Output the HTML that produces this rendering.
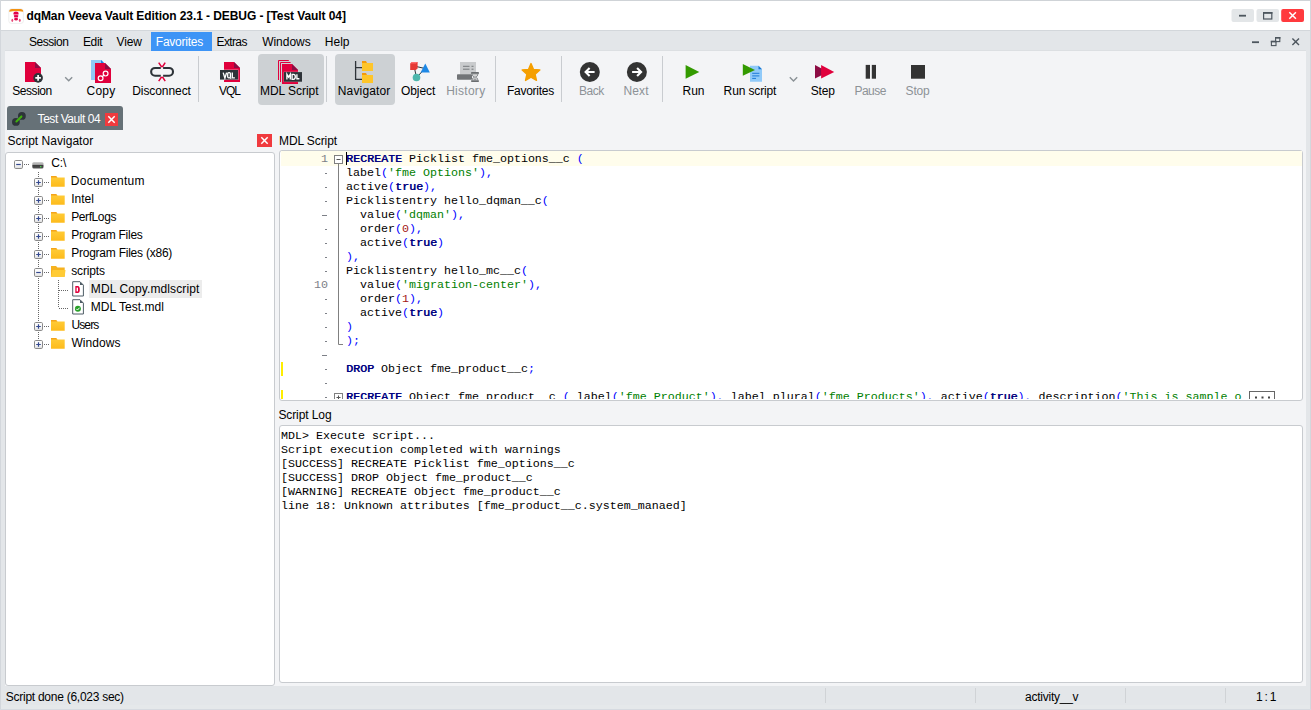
<!DOCTYPE html>
<html><head><meta charset="utf-8">
<style>
*{margin:0;padding:0;box-sizing:border-box}
html,body{width:1311px;height:710px;overflow:hidden}
body{position:relative;background:#e3e6e9;font-family:"Liberation Sans",sans-serif;font-size:12px;color:#000}
.a{position:absolute;white-space:nowrap}
.t{position:absolute;white-space:nowrap;line-height:14px;font-size:12px}
.m{position:absolute;white-space:pre;line-height:14px;font-family:"Liberation Mono",monospace;font-size:11.667px}
#title{left:1px;top:1px;width:1309px;height:29px;background:#fff}
#frameTop{left:0;top:0;width:1311px;height:1px;background:#cfd3d7}
#content{left:5px;top:51px;width:1301px;height:635px;background:#f3f4f6}
.box{position:absolute;background:#fff;border:1px solid #c8cbcf;border-radius:3px}
.tb{color:#000}
.dis{color:#8d9297}
.sep{position:absolute;width:1px;background:#c9ccd0}
.k{color:#000080;text-shadow:0.5px 0 0 #000080}
.p{color:#0000ff}
.s{color:#008000}
.n{color:#a31515}
.ln{position:absolute;white-space:pre;line-height:14px;font-family:"Liberation Mono",monospace;font-size:11.667px;color:#7d8087;text-align:right;width:40px}
</style></head><body>
<div class="a" id="frameTop"></div>
<div class="a" id="title"></div>
<div class="a" id="content"></div>


<!-- window frame lines -->
<div class="a" style="left:0;top:0;width:1px;height:710px;background:#d3d7dc"></div>
<div class="a" style="left:1310px;top:0;width:1px;height:710px;background:#d3d7dc"></div>
<div class="a" style="left:1px;top:30px;width:1309px;height:1px;background:#d3d7db"></div>
<div class="a" style="left:5px;top:50px;width:1301px;height:1px;background:#dcdfe2"></div>
<svg class="a" style="left:0;top:0;z-index:5" width="1311" height="710" viewBox="0 0 1311 710">
 <!-- app icon -->
 <rect x="8.8" y="8.8" width="14.6" height="14.6" rx="2.5" fill="#fff" stroke="#e4e4e4" stroke-width="0.6"/>
 <path d="M9.2 11.8 Q9.2 9 12 9 H20.4 Q23.2 9 23.2 11.8 Q16.2 10.2 9.2 11.8Z" fill="#f39212"/>
 <ellipse cx="16" cy="13.8" rx="2.6" ry="2.4" fill="#e2004a"/>
 <path d="M13.8 15.5 H18.4 L17.4 19.2 H14.8Z" fill="#e2004a"/>
 <ellipse cx="16.1" cy="19.3" rx="1.7" ry="1.2" fill="#e2004a"/>
 <rect x="12" y="14.4" width="8" height="0.7" fill="#fff" opacity="0.75"/>
 <rect x="12" y="17.0" width="8" height="0.7" fill="#fff" opacity="0.75"/>
 <ellipse cx="12.3" cy="20.3" rx="0.9" ry="1.6" fill="#e84a78"/>
 <ellipse cx="19.8" cy="20.3" rx="0.9" ry="1.6" fill="#e84a78"/>

 <!-- window controls -->
 <rect x="1231.5" y="9" width="22.5" height="13" rx="2" fill="#e3e6e8"/>
 <rect x="1239" y="14.8" width="7" height="1.8" fill="#4d565e"/>
 <rect x="1256.5" y="9" width="22.5" height="13" rx="2" fill="#e3e6e8"/>
 <rect x="1263.6" y="12.6" width="8.2" height="6.4" fill="none" stroke="#4d565e" stroke-width="1.2"/>
 <rect x="1263" y="12" width="9.4" height="1.8" fill="#4d565e"/>
 <rect x="1281.2" y="9" width="22.8" height="13" rx="2" fill="#ff3a3e"/>
 <path d="M1289.3 12.2 L1295.9 18.8 M1295.9 12.2 L1289.3 18.8" stroke="#fff" stroke-width="1.5"/>
 <!-- mdi controls -->
 <rect x="1252" y="41.3" width="7" height="1.8" fill="#4d565e"/>
 <rect x="1271.4" y="41.4" width="4.6" height="4.2" fill="none" stroke="#4d565e" stroke-width="1.1"/>
 <rect x="1275.6" y="37.6" width="4.2" height="4" fill="none" stroke="#4d565e" stroke-width="1.1"/>
 <rect x="1275" y="37" width="5.4" height="1.6" fill="#4d565e"/>
 <rect x="1270.8" y="40.8" width="5.6" height="1.6" fill="#4d565e"/>
 <path d="M1292.4 38.4 L1299 45 M1299 38.4 L1292.4 45" stroke="#4d565e" stroke-width="1.4"/>

 <!-- Session -->
 <path d="M25 62 H35 L41 68 V82 H25Z" fill="#e0003c"/>
 <path d="M35 62 L41 68 H35Z" fill="#8c0c44"/>
 
 <circle cx="38.1" cy="77.9" r="4.8" fill="#2d3338"/>
 <path d="M35.3 77.9 H40.9 M38.1 75.1 V80.7" stroke="#fff" stroke-width="1.7"/>
 <path d="M65.2 77.3 L68.7 80.8 L72.2 77.3" fill="none" stroke="#8a9196" stroke-width="1.4"/>
 <!-- Copy -->
 <path d="M91 60 H101.5 L104 62.5 V80 H91Z" fill="#90c8f6"/>
 <path d="M101 60 L104 63 H101Z" fill="#1e80e0"/>
 <path d="M95 63 H105 L111 69 V83 H95Z" fill="#e0003c"/>
 <path d="M105 63 L111 69 H105Z" fill="#8c0c44"/>
 <circle cx="100.6" cy="78.3" r="2.4" fill="none" stroke="#fff" stroke-width="1.2"/>
 <circle cx="105.6" cy="73.6" r="2.4" fill="none" stroke="#fff" stroke-width="1.2"/>
 <path d="M101.8 77 L104.4 74.8" stroke="#fff" stroke-width="1.2"/>
  <!-- Disconnect -->
 <path d="M160.8 67.95 H155.05 A3.9 3.9 0 0 0 155.05 75.75 H160.8" fill="none" stroke="#2d3338" stroke-width="2.1"/>
 <path d="M163.1 67.95 H169.1 A3.9 3.9 0 0 1 169.1 75.75 H163.1" fill="none" stroke="#2d3338" stroke-width="2.1"/>
 <path d="M158.7 62.6 L161.1 66.2 Q162 67 162.9 66.2 L165.2 62.6 M158.7 81.2 L161.1 77.6 Q162 76.8 162.9 77.6 L165.2 81.2" fill="none" stroke="#e0003c" stroke-width="1.5"/>
 <!-- VQL -->
 <path d="M224 62 H234 L240 68 V82 H224Z" fill="#e0003c"/>
 <path d="M234 62 L240 68 H234Z" fill="#8c0c44"/>
 <rect x="219.6" y="69.6" width="18.8" height="10.4" fill="#f3f4f6" opacity="0.7"/>
 <rect x="220" y="70" width="18" height="9.6" fill="#2d3338"/>
 <path d="M223.2 72.6 L224.9 78.2 L226.6 72.6 M230.3 77.6 L231 78.6 M232.3 72.6 V77.8 H234.9" fill="none" stroke="#fff" stroke-width="1.35"/>
 <rect x="227.7" y="72.6" width="2.7" height="5.2" rx="1.1" fill="none" stroke="#fff" stroke-width="1.3"/>
 <!-- MDL -->
 <path d="M278.5 80 V60.5 H288.8" fill="none" stroke="#e0003c" stroke-width="1"/>
 <path d="M280.5 82 V62.5 H290.6" fill="none" stroke="#e0003c" stroke-width="1"/>
 <path d="M282 64 H292 L298 70 V84 H282Z" fill="#e0003c"/>
 <path d="M292 64 L298 70 H292Z" fill="#8c0c44"/>
 <rect x="283.6" y="71.7" width="18.8" height="10.4" fill="#cdd1d4" opacity="0.6"/>
 <rect x="284" y="72.1" width="18" height="9.6" fill="#2d3338"/>
 <path d="M286.9 79.4 V74.3 L288.6 77.2 L290.3 74.3 V79.4 M292.1 74.4 V79.3 H293.5 Q295.3 79.3 295.3 76.85 Q295.3 74.4 293.5 74.4Z M296.9 74.3 V78.7 H299.4" fill="none" stroke="#fff" stroke-width="1.35"/>
<!-- Navigator -->
 <path d="M355.6 61 V80 M355.6 67.6 H362 M355.6 79.4 H362" fill="none" stroke="#2d3338" stroke-width="1.3"/>
 <path d="M362 61 H366 L367 63 H362Z" fill="#f59a0a"/>
 <rect x="362" y="63" width="11" height="8" fill="#fec52a"/>
 <path d="M362 73 H366 L367 75 H362Z" fill="#f59a0a"/>
 <rect x="362" y="75" width="11" height="8" fill="#fec52a"/>
 <!-- Object -->
 <path d="M414 66 L425 68.5 L416.5 77.5 Z" fill="none" stroke="#2d3338" stroke-width="1"/>
 <path d="M410.2 63.5 L412 62 H417.6 V68.5 L415.8 70 H410.2Z" fill="#e53935"/>
 <path d="M410.2 63.5 L412 62 H417.6 L415.8 63.5Z" fill="#ff6b6b"/>
 <path d="M425.3 63.4 L429.8 72.6 H420.6Z" fill="#1e88e5"/>
 <circle cx="416.5" cy="77.5" r="3.8" fill="#4db6ac"/>
 <!-- History -->
 <rect x="460" y="62" width="16" height="12.5" fill="#c9cbcd"/>
 <path d="M463 66.3 H469.5 M471.5 66.3 H473.5 M463 69.2 H469.5 M471.5 69.2 H473.5" stroke="#76797c" stroke-width="1"/>
 <rect x="457" y="74.2" width="15" height="5.6" rx="0.8" fill="#717477"/>
 <path d="M471.2 73 H478.8 M471.2 81.2 H478.8" stroke="#6b6e71" stroke-width="1.8"/>
 <path d="M472 73.8 Q472 76.6 474.6 77.1 Q472 77.7 472 80.4 H478 Q478 77.7 475.4 77.1 Q478 76.6 478 73.8Z" fill="#d3d4d5" stroke="#7a7d80" stroke-width="0.8"/>
 <path d="M473.4 79.8 L475 78.2 L476.6 79.8Z" fill="#8a8d90"/>
 <!-- Favorites star -->
 <path d="M531.00 63.60 L533.53 69.42 L539.84 70.03 L535.09 74.23 L536.47 80.42 L531.00 77.20 L525.53 80.42 L526.91 74.23 L522.16 70.03 L528.47 69.42Z" fill="#f59f00" stroke="#f59f00" stroke-width="1.4" stroke-linejoin="round"/>
 <!-- Back / Next -->
 <circle cx="589.8" cy="72" r="10" fill="#333"/>
 <path d="M594.6 72 H585.8 M589.6 68 L585.6 72 L589.6 76" fill="none" stroke="#fff" stroke-width="2.1"/>
 <circle cx="636.9" cy="72" r="10" fill="#333"/>
 <path d="M632.1 72 H640.9 M637.1 68 L641.1 72 L637.1 76" fill="none" stroke="#fff" stroke-width="2.1"/>
 <!-- Run -->
 <path d="M685.6 65.1 L699.3 71.9 L685.6 78.7Z" fill="#339a00"/>
 <!-- Run script -->
 <path d="M750 65.7 H758.5 L762 69.2 V81.7 H750Z" fill="#90caf9"/>
 <path d="M758.5 65.7 L762 69.2 H758.5Z" fill="#1976d2"/>
 <path d="M752.2 73.3 H759.4 M752.2 75.9 H759.4 M752.2 78.4 H756" stroke="#1e7ad8" stroke-width="1"/>
 <path d="M742.8 64 L755 69.9 L742.8 75.8Z" fill="#339a00"/>
 <path d="M789.8 77.2 L793.5 80.9 L797.2 77.2" fill="none" stroke="#8a9196" stroke-width="1.4"/>
 <!-- Step -->
 <path d="M815 65.1 L828.2 71.9 L815 78.6Z" fill="#8c0c44"/>
 <path d="M821.1 65.1 L834.2 71.9 L821.1 78.6Z" fill="#e0003c"/>
 <!-- Pause / Stop -->
 <rect x="865.7" y="64.9" width="4.3" height="13.8" fill="#333"/>
 <rect x="871.8" y="64.9" width="4.2" height="13.8" fill="#333"/>
 <rect x="911" y="65" width="14" height="13.7" fill="#333"/>

  <!-- tab icon -->
 <circle cx="15.9" cy="121.9" r="3.9" fill="#2d3339"/>
 <circle cx="21.9" cy="115.9" r="3.9" fill="#2d3339"/>
 <path d="M16.4 121.4 L21.4 116.4" stroke="#3fb00c" stroke-width="2.1" stroke-linecap="round"/>
 <!-- tab close -->
 <rect x="105" y="113" width="13" height="13" fill="#f03a3e"/>
 <path d="M108.3 116.3 L114.7 122.7 M114.7 116.3 L108.3 122.7" stroke="#fff" stroke-width="1.5"/>
 <!-- nav close -->
 <rect x="257" y="134" width="15" height="13" fill="#f03a3e"/>
 <path d="M261.3 137.3 L267.7 143.7 M267.7 137.3 L261.3 143.7" stroke="#fff" stroke-width="1.5"/>
</svg>

<!-- title -->
<div id="x1" class="t" style="left:26.4px;top:9px;font-weight:bold;letter-spacing:-0.078px">dqMan Veeva Vault Edition 23.1 - DEBUG - [Test Vault 04]</div>

<!-- menu -->
<div class="a" style="left:151px;top:32px;width:61px;height:19px;background:#3d94f6"></div>
<div id="x2" class="t" style="left:29.0px;top:35px;letter-spacing:-0.467px">Session</div>
<div id="x3" class="t" style="left:83.0px;top:35px;letter-spacing:-0.4px">Edit</div>
<div id="x4" class="t" style="left:116.6px;top:35px;letter-spacing:-0.133px">View</div>
<div id="x5" class="t" style="left:155.8px;top:35px;color:#fff;letter-spacing:-0.25px">Favorites</div>
<div id="x6" class="t" style="left:216.6px;top:35px;letter-spacing:-0.64px">Extras</div>
<div id="x7" class="t" style="left:262.2px;top:35px;letter-spacing:-0.034px">Windows</div>
<div id="x8" class="t" style="left:324.8px;top:35px;letter-spacing:0.0px">Help</div>

<!-- toolbar highlighted buttons -->
<div class="a" style="left:258px;top:54px;width:66px;height:51px;background:#cdd1d4;border-radius:4px"></div>
<div class="a" style="left:335px;top:54px;width:60px;height:51px;background:#cdd1d4;border-radius:4px"></div>
<div class="sep" style="left:198px;top:56px;height:46px"></div>
<div class="sep" style="left:326px;top:56px;height:46px"></div>
<div class="sep" style="left:495px;top:56px;height:46px"></div>
<div class="sep" style="left:561px;top:56px;height:46px"></div>
<div class="sep" style="left:662px;top:56px;height:46px"></div>

<!-- toolbar labels -->
<div id="x9" class="t" style="left:12.2px;top:84px;letter-spacing:-0.433px">Session</div>
<div id="x10" class="t" style="left:86.6px;top:84px;letter-spacing:0.2px">Copy</div>
<div id="x11" class="t" style="left:132.2px;top:84px;letter-spacing:-0.067px">Disconnect</div>
<div id="x12" class="t" style="left:219.0px;top:84px;letter-spacing:-1.0px">VQL</div>
<div id="x13" class="t" style="left:260.0px;top:84px;letter-spacing:-0.044px">MDL Script</div>
<div id="x14" class="t" style="left:337.8px;top:84px;letter-spacing:0.15px">Navigator</div>
<div id="x15" class="t" style="left:401.0px;top:84px;letter-spacing:-0.08px">Object</div>
<div id="x16" class="t dis" style="left:446.2px;top:84px;letter-spacing:0.267px">History</div>
<div id="x17" class="t" style="left:507.0px;top:84px;letter-spacing:-0.275px">Favorites</div>
<div id="x18" class="t dis" style="left:579.0px;top:84px;letter-spacing:-0.467px">Back</div>
<div id="x19" class="t dis" style="left:623.4px;top:84px;letter-spacing:0.133px">Next</div>
<div id="x20" class="t" style="left:682.6px;top:84px;letter-spacing:-0.1px">Run</div>
<div id="x21" class="t" style="left:723.6px;top:84px;letter-spacing:-0.133px">Run script</div>
<div id="x22" class="t" style="left:810.8px;top:84px;letter-spacing:-0.2px">Step</div>
<div id="x23" class="t dis" style="left:854.4px;top:84px;letter-spacing:-0.5px">Pause</div>
<div id="x24" class="t dis" style="left:905.6px;top:84px;letter-spacing:-0.2px">Stop</div>

<!-- tab -->
<div class="a" style="left:7px;top:106px;width:116px;height:24px;background:#667177;border-radius:3px 3px 0 0"></div>
<div id="x25" class="t" style="left:37.6px;top:112px;color:#fff;letter-spacing:-0.45px">Test Vault 04</div>

<!-- panels -->
<div id="x26" class="t" style="left:7.4px;top:134px;letter-spacing:0.027px">Script Navigator</div>
<div id="x27" class="t" style="left:279.0px;top:134px;letter-spacing:-0.088px">MDL Script</div>
<div id="x28" class="t" style="left:278.4px;top:408px;letter-spacing:-0.089px">Script Log</div>
<div class="box" style="left:5px;top:152px;width:270px;height:534px"></div>
<div class="box" style="left:279px;top:150px;width:1024px;height:251px;overflow:hidden"></div>
<div class="box" style="left:279px;top:425px;width:1024px;height:258px"></div>


<!-- tree -->
<div class="a" style="left:89px;top:280px;width:113px;height:18px;background:#ececec"></div>
<svg class="a" style="left:0;top:0;z-index:4" width="1311" height="710" viewBox="0 0 1311 710">
 <defs>
  <linearGradient id="bx" x1="0" y1="0" x2="0" y2="1"><stop offset="0" stop-color="#fff"/><stop offset="0.55" stop-color="#f6f6f6"/><stop offset="1" stop-color="#dedede"/></linearGradient>
  <linearGradient id="dr" x1="0" y1="0" x2="0" y2="1"><stop offset="0" stop-color="#d2d2d2"/><stop offset="0.45" stop-color="#9a9a9a"/><stop offset="0.5" stop-color="#3c3c3c"/><stop offset="1" stop-color="#555"/></linearGradient>
  <linearGradient id="fd" x1="0" y1="0" x2="0" y2="1"><stop offset="0" stop-color="#ffcd3a"/><stop offset="1" stop-color="#fdbb1c"/></linearGradient>
  <g id="plus"><rect x="0.5" y="0.5" width="8" height="8" rx="1.2" fill="url(#bx)" stroke="#8a8a8a" stroke-width="1"/><path d="M2.2 4.5 H6.8 M4.5 2.2 V6.8" stroke="#34498f" stroke-width="1.2"/></g>
  <g id="minus"><rect x="0.5" y="0.5" width="8" height="8" rx="1.2" fill="url(#bx)" stroke="#8a8a8a" stroke-width="1"/><path d="M2.2 4.5 H6.8" stroke="#34498f" stroke-width="1.2"/></g>
  <g id="fold"><path d="M0 0 H5 L6.5 1.5 H13.7 V10.7 H0Z" fill="url(#fd)"/><path d="M0 0 H5 L6.5 1.5 H0Z" fill="#f4a41a"/></g>
 </defs>
 <use href="#minus" x="14" y="160"/>
 <path d="M24 164.5 H30" stroke="#666" stroke-width="1" stroke-dasharray="1 1"/>
 <rect x="32.3" y="162" width="11.2" height="6.5" rx="1.5" fill="url(#dr)"/>
 <rect x="40" y="166" width="1.4" height="1.3" fill="#48d048"/>
 <path d="M38.5 172 V343" stroke="#666" stroke-width="1" stroke-dasharray="1 1"/>
 <g id="rows">
 </g>
 <use href="#plus" x="34" y="178"/><path d="M44 182.5 H50" stroke="#666" stroke-dasharray="1 1"/><use href="#fold" x="51" y="176"/>
 <use href="#plus" x="34" y="196"/><path d="M44 200.5 H50" stroke="#666" stroke-dasharray="1 1"/><use href="#fold" x="51" y="194"/>
 <use href="#plus" x="34" y="214"/><path d="M44 218.5 H50" stroke="#666" stroke-dasharray="1 1"/><use href="#fold" x="51" y="212"/>
 <use href="#plus" x="34" y="232"/><path d="M44 236.5 H50" stroke="#666" stroke-dasharray="1 1"/><use href="#fold" x="51" y="230"/>
 <use href="#plus" x="34" y="250"/><path d="M44 254.5 H50" stroke="#666" stroke-dasharray="1 1"/><use href="#fold" x="51" y="248"/>
 <use href="#minus" x="34" y="268"/><path d="M44 272.5 H50" stroke="#666" stroke-dasharray="1 1"/>
 <path d="M51 266 H56 L57.5 267.5 H64.7 V276.7 H51Z" fill="#f6b21f"/>
 <path d="M52.5 270 H65.5 L64.7 276.7 H51Z" fill="#ffcb35"/>
 <use href="#plus" x="34" y="322"/><path d="M44 326.5 H50" stroke="#666" stroke-dasharray="1 1"/><use href="#fold" x="51" y="320"/>
 <use href="#plus" x="34" y="340"/><path d="M44 344.5 H50" stroke="#666" stroke-dasharray="1 1"/><use href="#fold" x="51" y="338"/>
 <path d="M58.5 280 V308 M59 290.5 H69 M59 308.5 H69" stroke="#666" stroke-width="1" stroke-dasharray="1 1"/>
 <path d="M72.7 281.7 H80 L83.4 285.1 V296 H72.7Z" fill="#fff" stroke="#4f5d66" stroke-width="1"/>
 <path d="M80 281.7 L83.4 285.1 H80Z" fill="#4f5d66"/>
 <path d="M75.3 286 H77.8 Q79.8 286 79.8 289.5 Q79.8 293 77.8 293 H75.3Z" fill="#e0003c"/>
 <rect x="76.6" y="287.6" width="1.4" height="3.8" fill="#fff"/>
 <path d="M72.7 299.7 H80 L83.4 303.1 V314 H72.7Z" fill="#fff" stroke="#4f5d66" stroke-width="1"/>
 <path d="M80 299.7 L83.4 303.1 H80Z" fill="#4f5d66"/>
 <circle cx="77.9" cy="308.8" r="3" fill="#2aa02a"/>
 <path d="M76.3 308.8 L77.5 310 L79.6 307.7" fill="none" stroke="#fff" stroke-width="1"/>
</svg>
<div id="x29" class="t" style="left:51.2px;top:156px;letter-spacing:-0.1px">C:\</div>
<div id="x30" class="t" style="left:70.8px;top:174px;letter-spacing:0.267px">Documentum</div>
<div id="x31" class="t" style="left:71.2px;top:192px;letter-spacing:0.0px">Intel</div>
<div id="x32" class="t" style="left:71.2px;top:210px;letter-spacing:-0.4px">PerfLogs</div>
<div id="x33" class="t" style="left:71.2px;top:228px;letter-spacing:-0.25px">Program Files</div>
<div id="x34" class="t" style="left:71.2px;top:246px;letter-spacing:-0.234px">Program Files (x86)</div>
<div id="x35" class="t" style="left:71.2px;top:264px;letter-spacing:-0.133px">scripts</div>
<div id="x36" class="t" style="left:90.8px;top:282px;letter-spacing:0.106px">MDL Copy.mdlscript</div>
<div id="x37" class="t" style="left:90.8px;top:300px;letter-spacing:0.036px">MDL Test.mdl</div>
<div id="x38" class="t" style="left:71.4px;top:318px;letter-spacing:-0.85px">Users</div>
<div id="x39" class="t" style="left:71.4px;top:336px;letter-spacing:0.067px">Windows</div>


<!-- editor -->
<div class="a" style="left:280px;top:151px;width:1022px;height:248px;overflow:hidden;z-index:3">
 <div class="a" style="left:1px;top:0;width:1021px;height:15px;background:#fffdec"></div>
 <div class="a" style="left:1px;top:211px;width:2px;height:14px;background:#ffee00"></div>
 <div class="a" style="left:1px;top:239px;width:2px;height:14px;background:#ffee00"></div>
 <div class="ln" style="left:8px;top:1px">1








10</div>
 <div class="m" style="left:66px;top:1px"><span class="k">RECREATE</span> Picklist fme_options__c <span class="p">(</span>
label<span class="p">(</span><span class="s">'fme Options'</span><span class="p">),</span>
active<span class="p">(</span><span class="k">true</span><span class="p">),</span>
Picklistentry hello_dqman__c<span class="p">(</span>
  value<span class="p">(</span><span class="s">'dqman'</span><span class="p">),</span>
  order<span class="p">(</span><span class="n">0</span><span class="p">),</span>
  active<span class="p">(</span><span class="k">true</span><span class="p">)</span>
<span class="p">),</span>
Picklistentry hello_mc__c<span class="p">(</span>
  value<span class="p">(</span><span class="s">'migration-center'</span><span class="p">),</span>
  order<span class="p">(</span><span class="n">1</span><span class="p">),</span>
  active<span class="p">(</span><span class="k">true</span><span class="p">)</span>
<span class="p">)</span>
<span class="p">);</span>

<span class="k">DROP</span> Object fme_product__c<span class="p">;</span>

<span class="k">RECREATE</span> Object fme_product__c <span class="p">(</span> label<span class="p">(</span><span class="s">'fme Product'</span><span class="p">),</span> label_plural<span class="p">(</span><span class="s">'fme Products'</span><span class="p">),</span> active<span class="p">(</span><span class="k">true</span><span class="p">),</span> description<span class="p">(</span><span class="s">'This is sample o</span></div>
 <div class="a" style="left:66px;top:1px;width:1px;height:13px;background:#000"></div>
 <svg class="a" style="left:0;top:0" width="1022" height="260">
  <rect x="45" y="22" width="2" height="1" fill="#7d8087"/>
  <rect x="45" y="36" width="2" height="1" fill="#7d8087"/>
  <rect x="45" y="50" width="2" height="1" fill="#7d8087"/>
  <rect x="42" y="64" width="5" height="1" fill="#7d8087"/>
  <rect x="45" y="78" width="2" height="1" fill="#7d8087"/>
  <rect x="45" y="92" width="2" height="1" fill="#7d8087"/>
  <rect x="45" y="106" width="2" height="1" fill="#7d8087"/>
  <rect x="45" y="120" width="2" height="1" fill="#7d8087"/>
  <rect x="45" y="148" width="2" height="1" fill="#7d8087"/>
  <rect x="45" y="162" width="2" height="1" fill="#7d8087"/>
  <rect x="45" y="176" width="2" height="1" fill="#7d8087"/>
  <rect x="45" y="190" width="2" height="1" fill="#7d8087"/>
  <rect x="42" y="204" width="5" height="1" fill="#7d8087"/>
  <rect x="45" y="218" width="2" height="1" fill="#7d8087"/>
  <rect x="45" y="232" width="2" height="1" fill="#7d8087"/>
  <rect x="45" y="246" width="2" height="1" fill="#7d8087"/>
  <rect x="54.5" y="4.5" width="8" height="8" fill="#fff" stroke="#808080" stroke-width="1"/>
  <path d="M56.5 8.5 H60.5" stroke="#555" stroke-width="1"/>
  <path d="M58.5 13 V193.5 H63" fill="none" stroke="#808080" stroke-width="1"/>
  <rect x="54.5" y="242.5" width="8" height="8" fill="#fff" stroke="#808080" stroke-width="1"/>
  <path d="M56.5 246.5 H60.5 M58.5 244.5 V248.5" stroke="#555" stroke-width="1"/>
  <rect x="969.5" y="240.5" width="25" height="12" fill="#fff" stroke="#666" stroke-width="1"/>
  <rect x="975" y="245.5" width="2" height="2" fill="#444"/><rect x="981.5" y="245.5" width="2" height="2" fill="#444"/><rect x="988" y="245.5" width="2" height="2" fill="#444"/>
 </svg>
</div>
<div class="m" style="left:281px;top:429px;z-index:3">MDL&gt; Execute script...
Script execution completed with warnings
[SUCCESS] RECREATE Picklist fme_options__c
[SUCCESS] DROP Object fme_product__c
[WARNING] RECREATE Object fme_product__c
line 18: Unknown attributes [fme_product__c.system_manaed]</div>

<!-- status -->
<div id="x40" class="t" style="left:5.8px;top:690px;letter-spacing:-0.263px">Script done (6,023 sec)</div>
<div class="sep" style="left:825px;top:688px;height:15px;background:#d0d3d6"></div>
<div class="sep" style="left:975px;top:688px;height:15px;background:#d0d3d6"></div>
<div class="a" style="left:1px;top:705px;width:1309px;height:4px;background:#e5e8ea"></div>
<div class="a" style="left:0;top:709px;width:1311px;height:1px;background:#d6dae0"></div>
<div class="sep" style="left:1125px;top:688px;height:15px;background:#d0d3d6"></div>
<div class="sep" style="left:1225px;top:688px;height:15px;background:#d0d3d6"></div>
<div id="x41" class="t" style="left:1025.0px;top:690px;letter-spacing:-0.24px">activity__v</div>
<div id="x42" class="t" style="left:1256.0px;top:690px;letter-spacing:-0.75px">1 : 1</div>

</body></html>
